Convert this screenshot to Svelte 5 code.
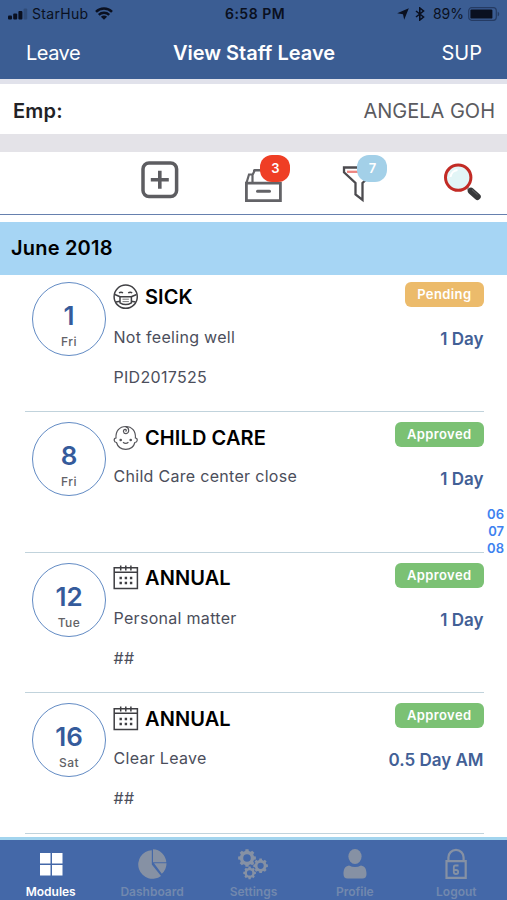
<script lang="ts">
    type Leave = {
        day: number;
        weekday: string;
        type: string;
        icon: "sick" | "child" | "calendar";
        reason: string;
        reference?: string;
        status: "Pending" | "Approved";
        duration: string;
    };

    const leaves: Leave[] = [
        { day: 1, weekday: "Fri", type: "SICK", icon: "sick", reason: "Not feeling well", reference: "PID2017525", status: "Pending", duration: "1 Day" },
        { day: 8, weekday: "Fri", type: "CHILD CARE", icon: "child", reason: "Child Care center close", status: "Approved", duration: "1 Day" },
        { day: 12, weekday: "Tue", type: "ANNUAL", icon: "calendar", reason: "Personal matter", reference: "##", status: "Approved", duration: "1 Day" },
        { day: 16, weekday: "Sat", type: "ANNUAL", icon: "calendar", reason: "Clear Leave", reference: "##", status: "Approved", duration: "0.5 Day AM" },
    ];

    const months = ["06", "07", "08"];
    const tabs = ["Modules", "Dashboard", "Settings", "Profile", "Logout"];

    let activeTab = $state("Modules");

    // outline of a cog wheel with square teeth
    function cog(cx: number, cy: number, r: number, teeth = 8) {
        const points: string[] = [];
        const step = (Math.PI * 2) / teeth;
        for (let i = 0; i < teeth; i++) {
            const a = i * step;
            for (const [offset, radius] of [[-0.32, 0.8], [-0.22, 1], [0.22, 1], [0.32, 0.8]]) {
                const x = cx + Math.cos(a + offset * step) * r * radius;
                const y = cy + Math.sin(a + offset * step) * r * radius;
                points.push(`${x.toFixed(2)} ${y.toFixed(2)}`);
            }
        }
        const h = r * 0.42;
        return `M${points.join("L")}ZM${cx - h} ${cy}a${h} ${h} 0 1 0 ${h * 2} 0a${h} ${h} 0 1 0 ${-h * 2} 0Z`;
    }
</script>

<div class="screen">
    <header>
        <div class="status-bar">
            <div class="carrier">
                <svg width="20" height="12" viewBox="0 0 20 12">
                    <rect x="0" y="7.5" width="4" height="4" rx="1" />
                    <rect x="5.2" y="5.5" width="4" height="6" rx="1" />
                    <rect x="10.4" y="3" width="4" height="8.5" rx="1" />
                    <rect x="15.6" y="0.5" width="3.6" height="11" rx="1" opacity="0.22" />
                </svg>
                <span>StarHub</span>
                <svg class="wifi" width="18" height="13" viewBox="0 0 18 13">
                    <path d="M1 4.8a11.4 11.4 0 0 1 16 0M3.8 7.8a7.5 7.5 0 0 1 10.4 0" fill="none" stroke="#0a1020" stroke-width="2.5" />
                    <path d="M9 12.8 5.9 9.7a4.4 4.4 0 0 1 6.2 0Z" />
                </svg>
            </div>
            <span class="clock">6:58 PM</span>
            <div class="battery">
                <svg width="12" height="12" viewBox="0 0 12 12">
                    <path d="M11.8.2 7.2 11.8 6 6.2.2 5.2Z" />
                </svg>
                <svg class="bluetooth" width="10" height="14" viewBox="0 0 10 14">
                    <path d="m1 4 7.5 6L4.8 13V1l3.7 3L1 10" fill="none" stroke="#0a1020" stroke-width="1.6" />
                </svg>
                <span>89%</span>
                <svg class="cell" width="32" height="14" viewBox="0 0 32 14">
                    <rect x="0.7" y="0.7" width="27.6" height="12.6" rx="3" fill="none" stroke="#253b63" stroke-width="1.2" />
                    <rect x="2.4" y="2.4" width="22" height="9.2" rx="1.2" />
                    <path d="M29.7 4.7c2 .6 2 4 0 4.6Z" fill="#253b63" />
                </svg>
            </div>
        </div>
        <nav>
            <span class="back">Leave</span>
            <h1>View Staff Leave</h1>
            <span class="role">SUP</span>
        </nav>
    </header>

    <div class="employee">
        <span class="label">Emp:</span>
        <span class="name">ANGELA GOH</span>
    </div>

    <div class="toolbar">
        <button class="add" aria-label="Add leave">
            <svg width="38" height="38" viewBox="0 0 38 38" fill="none" stroke="#5d5d61">
                <rect x="2" y="2" width="33.6" height="33.6" rx="6" stroke-width="3.5" />
                <path d="M18.8 9.8v18M9.8 18.8h18" stroke-width="3.6" />
            </svg>
        </button>
        <button class="inbox" aria-label="Inbox">
            <svg width="40" height="44" viewBox="0 0 40 44" fill="none" stroke="#636367" stroke-width="2.8">
                <path d="M2.4 23.2h34v17.4h-34Z" />
                <path d="M2.4 23.2 5 14.5h3.5V22M8.5 15l2.4-5H22M9 10.5h13" stroke-width="2.2" />
                <path d="M13.5 31.2h12" stroke-width="3" stroke-linecap="round" />
            </svg>
            <span class="badge red">3</span>
        </button>
        <button class="filter" aria-label="Filter">
            <svg width="40" height="48" viewBox="0 0 40 48" fill="none" stroke="#4c4b4f" stroke-width="2.3">
                <path d="M6 14.8h12" stroke="#ed8580" />
                <path d="M25 10.5H3v4.800L14.500 26v11.500L21.500 43V26l5.500-5" />
            </svg>
            <span class="badge blue">7</span>
        </button>
        <button class="search" aria-label="Search">
            <svg width="40" height="40" viewBox="0 0 40 40">
                <path d="m24.5 25 3.5 3.5" stroke="#9a9a9a" stroke-width="3" />
                <circle cx="15.2" cy="14.6" r="12.7" fill="#e2f5f6" stroke="#c22b25" stroke-width="3" />
                <path d="M7.5 14a8 8 0 0 1 7-7" fill="none" stroke="#fff" stroke-width="2" />
                <path d="m28 28 6.500 5.700" stroke="#38393b" stroke-width="6.500" stroke-linecap="round" />
                <path d="m29 26.7 5.5 5" stroke="#67696c" stroke-width="1" />
            </svg>
        </button>
    </div>

    <main>
        <h2>June 2018</h2>
        <ul>
            {#each leaves as leave}
                <li class:short={!leave.reference}>
                    <div class="date">
                        <span class="day">{leave.day}</span>
                        <span class="weekday">{leave.weekday}</span>
                    </div>
                    <div class="details">
                        <h3>
                            {#if leave.icon === "sick"}
                                <svg width="26" height="26" viewBox="0 0 26 26" fill="none" stroke="#404044" stroke-width="1.5">
                                    <circle cx="12.7" cy="12.7" r="11.6" />
                                    <path d="M6 8.8q2-1.2 4 0M15.2 8.8q2-1.2 4 0M1.8 10.5l5.3 2.3M23.6 10.5l-5.3 2.3M2.8 18l4.3-.7M22.6 18l-4.3-.7" />
                                    <path d="M7 12.8h11.4v6q-5.7 3.5-11.4 0Z" />
                                    <path d="M9.5 15.2h6.4M9.5 17.6h6.4" stroke-width="0.7" />
                                </svg>
                            {:else if leave.icon === "child"}
                                <svg width="26" height="26" viewBox="0 0 26 26" fill="none" stroke="#55555a" stroke-width="1.2">
                                    <path d="M3 13C2.5 6 6.5 1.5 12.700 1.500s10.200 4.500 9.700 11.500c2.600.3 2.400 4.200-.5 4.500-1.200 4.500-5 6.800-9.200 6.800s-8-2.300-9.200-6.800c-2.900-.3-3.100-4.200-.5-4.500Z" />
                                    <path d="M12.5 1.800c4 .2 4.300 6.600.5 6.800-3 .1-3.400-4.200-.9-4.200 1.500 0 1.600 1.800.4 1.900M10 17.300q2.700 2.300 5.400 0" />
                                    <circle cx="7.7" cy="15" r="0.7" fill="#55555a" />
                                    <circle cx="17.7" cy="15" r="0.7" fill="#55555a" />
                                </svg>
                            {:else}
                                <svg width="26" height="26" viewBox="0 0 26 26" fill="none" stroke="#3e3e42" stroke-width="1.5">
                                    <path d="M1.2 2.8h23.2v20.700H1.200ZM1.200 7.200h23.200M7.700.5v5M12.800.5v5M17.900.5v5" />
                                    <path d="M6.500 13h12.800M6.500 18h12.800" stroke-width="2.300" stroke-dasharray="2.400 2.800" />
                                </svg>
                            {/if}
                            {leave.type}
                        </h3>
                        <p>{leave.reason}</p>
                        {#if leave.reference}
                            <p>{leave.reference}</p>
                        {/if}
                    </div>
                    <div class="summary">
                        <span class="status {leave.status.toLowerCase()}">{leave.status}</span>
                        <span class="duration">{leave.duration}</span>
                    </div>
                </li>
            {/each}
        </ul>
    </main>

    <div class="month-index">
        {#each months as month}
            <span>{month}</span>
        {/each}
    </div>

    <footer>
        {#each tabs as tab}
            <button class="tab" class:active={tab === activeTab} onclick={() => (activeTab = tab)}>
                <svg width="32" height="32" viewBox="0 0 32 32" fill="currentColor">
                    {#if tab === "Modules"}
                        <path d="M5 5h10.5v10.5H5ZM17 5h10.5v10.5H17ZM5 17h10.5v10.5H5ZM17 17h10.5v10.5H17Z" />
                    {:else if tab === "Dashboard"}
                        <path d="M15.8 2.200V16.500l9.200 11.500A14.300 14.300 0 1 1 15.800 2.200ZM17 1.300a14 14 0 0 1 13.300 13H17ZM18 15.300h12.500a13.500 13.500 0 0 1-4.700 10.500Z" />
                    {:else if tab === "Settings"}
                        <path fill-rule="evenodd" d={cog(10, 10, 9)} />
                        <path fill-rule="evenodd" d={cog(23.6, 17.8, 7.4)} />
                        <path fill-rule="evenodd" d={cog(12.6, 24.9, 6.4)} />
                    {:else if tab === "Profile"}
                        <ellipse cx="16" cy="8.5" rx="6.6" ry="7.4" />
                        <path d="M10 17.5q6 3 12 0c4.2.8 5.5 4 5.5 8.5 0 3-1.5 4.500-4 4.500h-15c-2.500 0-4-1.500-4-4.500 0-4.500 1.300-7.700 5.500-8.500Z" />
                    {:else}
                        <path d="M6.5 13.2h19.2v16.6H6.5ZM8.4 13V9.5a7.6 7.6 0 0 1 15.2 0V13" fill="none" stroke="currentColor" stroke-width="2.2" />
                        <path d="M18.5 17.5h-3.2q-1.500 0-1.500 2v4.500q0 2 2.200 2t2.200-2-2.200-2h-2" fill="none" stroke="currentColor" stroke-width="1.8" />
                    {/if}
                </svg>
                <span>{tab}</span>
            </button>
        {/each}
    </footer>
</div>

<style>
    :global(body) {
        background: #fff;
    }

    .screen {
        position: relative;
        display: flex;
        flex-direction: column;
        width: 507px;
        height: 900px;
        overflow: hidden;
        background: #fff;
        font-family: Inter, "Liberation Sans", sans-serif;
        color: #000;
    }

    h1, h2, h3, p, ul {
        margin: 0;
        padding: 0;
    }

    button {
        position: relative;
        padding: 0;
        border: none;
        background: none;
        font-family: inherit;
    }

    svg {
        display: block;
        flex: none;
    }

    header {
        flex: none;
        height: 79px;
        background: #3b5d93;
    }

    .status-bar {
        display: grid;
        grid-template-columns: 1fr auto 1fr;
        align-items: center;
        height: 27px;
        padding: 0 7px 0 8px;
        color: #0a1020;
        fill: #0a1020;
        font-size: 14px;
    }

    .carrier, .battery {
        display: flex;
        align-items: center;
    }

    .carrier span {
        margin: 0 7px 0 4px;
        letter-spacing: 0.3px;
    }

    .clock {
        padding-left: 2px;
        font-weight: 600;
        letter-spacing: 0.5px;
    }

    .battery {
        justify-content: flex-end;
    }

    .bluetooth {
        margin: 0 8px 0 6px;
    }

    .cell {
        margin-left: 4px;
    }

    nav {
        display: grid;
        grid-template-columns: 1fr auto 1fr;
        align-items: center;
        height: 51px;
        padding: 0 25px 0 26px;
        color: #fff;
        font-size: 20px;
    }

    .back {
        letter-spacing: -0.5px;
    }

    h1 {
        font-size: 20px;
        font-weight: 600;
    }

    .role {
        text-align: right;
    }

    .employee {
        display: flex;
        flex: none;
        align-items: center;
        justify-content: space-between;
        box-sizing: border-box;
        height: 73px;
        padding: 3px 12px 0 13px;
        border-top: 5px solid #e1e2eb;
        border-bottom: 18px solid #e4e3e8;
        font-size: 20px;
    }

    .label {
        color: #222226;
        font-weight: 600;
        letter-spacing: 0.2px;
    }

    .name {
        color: #5b5b60;
    }

    .toolbar {
        display: grid;
        flex: none;
        grid-template-columns: repeat(5, 1fr);
        height: 62px;
        border-bottom: 1.5px solid #6680ae;
        margin-bottom: 6.5px;
    }

    .toolbar button {
        width: 40px;
        height: 46px;
        justify-self: center;
    }

    .toolbar .add {
        grid-column: 2;
        margin-left: 18px;
        padding-top: 9px;
    }

    .inbox {
        margin-left: 22px;
        margin-top: 7px;
    }

    .filter {
        margin-left: 13px;
        margin-top: 5px;
    }

    .search {
        margin-left: 13px;
        margin-top: 8px;
    }

    .badge {
        position: absolute;
        top: -4px;
        left: 16px;
        width: 30px;
        height: 27px;
        border-radius: 12px;
        color: #fff;
        font-size: 13px;
        font-weight: 600;
        line-height: 27px;
        text-align: center;
    }

    .badge.red {
        background: #ef3e25;
    }

    .badge.blue {
        top: -2px;
        background: #a3d0e8;
    }

    main {
        flex: 1;
        min-height: 0;
        overflow: hidden;
    }

    h2 {
        height: 53px;
        padding-left: 11px;
        background: #a6d5f4;
        font-size: 20px;
        font-weight: 600;
        letter-spacing: 0.2px;
        line-height: 52px;
    }

    ul {
        margin: -3px 23.5px 0 25px;
        list-style: none;
    }

    li {
        display: grid;
        grid-template-columns: 88.5px 1fr auto;
        box-sizing: border-box;
        height: 140.5px;
        padding-top: 10px;
        border-bottom: 1.5px solid #c1d3dc;
    }

    .date {
        display: flex;
        flex-direction: column;
        align-items: center;
        box-sizing: border-box;
        width: 74px;
        height: 74px;
        margin-left: 7px;
        padding-top: 18px;
        border: 1.5px solid #628bc4;
        border-radius: 50%;
    }

    .day {
        color: #355b9b;
        font-size: 26px;
        font-weight: 600;
        line-height: 30px;
    }

    .weekday {
        margin-top: 3px;
        color: #626266;
        font-size: 12px;
        font-weight: 500;
        letter-spacing: 0.5px;
        line-height: 16px;
    }

    h3 {
        display: flex;
        align-items: center;
        gap: 6px;
        height: 31px;
        margin-left: -0.5px;
        font-size: 20px;
        font-weight: 600;
        letter-spacing: 0.1px;
    }

    p {
        height: 40px;
        color: #4b4e5b;
        font-size: 16px;
        letter-spacing: 0.3px;
        line-height: 49px;
    }

    .short p {
        line-height: 46px;
    }

    .summary {
        display: flex;
        flex-direction: column;
        align-items: flex-end;
    }

    .status {
        height: 25px;
        padding: 0 12px;
        border-radius: 6px;
        color: #fff;
        font-size: 13px;
        font-weight: 600;
        letter-spacing: 0.4px;
        line-height: 25px;
    }

    .pending {
        background: #ecbb6b;
    }

    .approved {
        background: #7bc174;
    }

    .duration {
        margin-top: 22px;
        color: #426096;
        font-size: 17px;
        font-weight: 600;
        line-height: 20px;
    }

    .month-index {
        position: absolute;
        top: 505.5px;
        right: 3px;
        display: flex;
        flex-direction: column;
        color: #3e82f0;
        font-size: 13px;
        font-weight: 600;
        line-height: 17px;
        text-align: right;
    }

    footer {
        display: grid;
        flex: none;
        grid-template-columns: repeat(5, 1fr);
        height: 60px;
        border-top: 3px solid #a2d4ee;
        background: #4468a8;
    }

    .tab {
        display: flex;
        flex-direction: column;
        align-items: center;
        padding-top: 8px;
        color: #8691a4;
        font-size: 12px;
        font-weight: 600;
    }

    .tab span {
        margin-top: 4px;
        color: #7288ae;
        line-height: 15px;
    }

    .tab.active, .tab.active span {
        color: #fff;
    }
</style>
